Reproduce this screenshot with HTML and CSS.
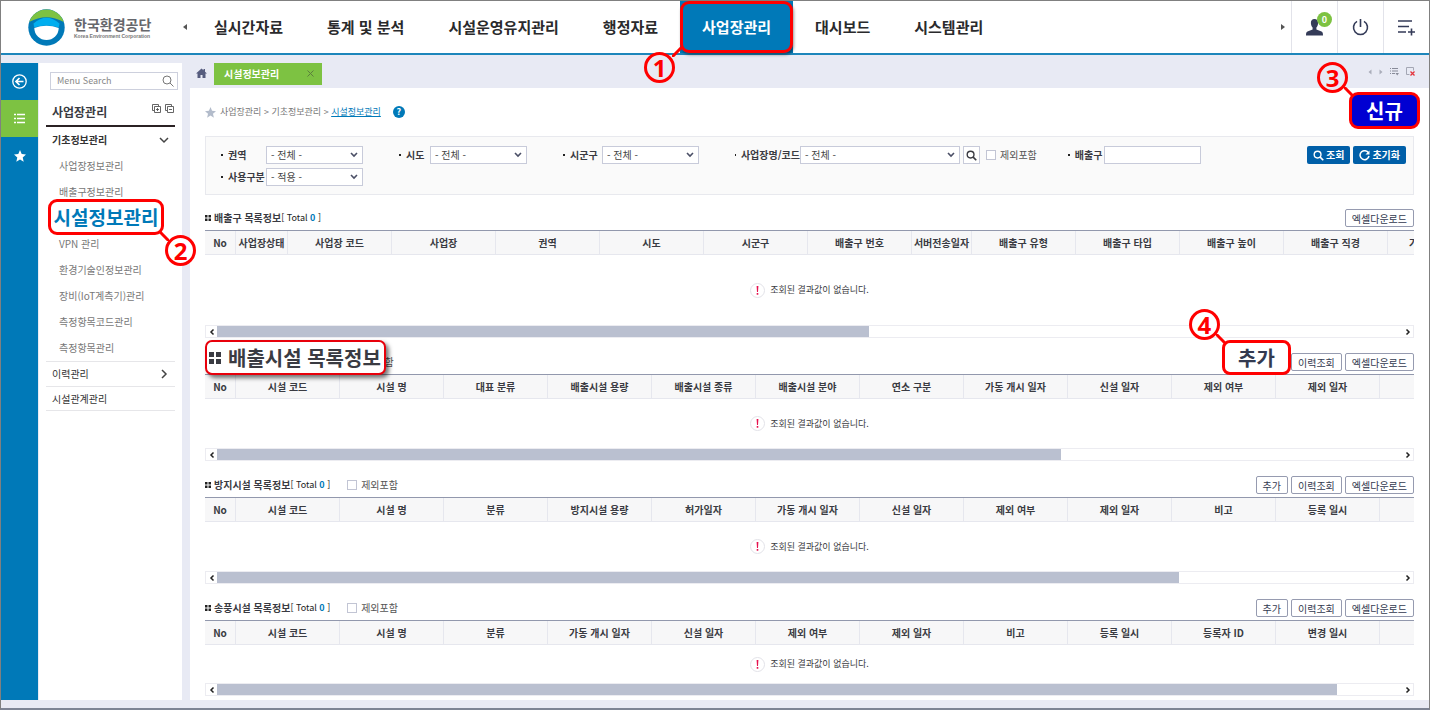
FILE: index.html
```html
<!DOCTYPE html>
<html lang="ko">
<head>
<meta charset="utf-8">
<title>시설정보관리</title>
<link rel="stylesheet" href="styles.css">
</head>
<body>
<svg class="sprite" aria-hidden="true">
  <symbol id="i-down" viewBox="0 0 8 6"><path d="M1 1l3 3 3-3" fill="none" stroke="currentColor" stroke-width="1.6"/></symbol>
  <symbol id="i-left" viewBox="0 0 6 8"><path d="M4.5 1.5L2 4l2.500 2.500" fill="none" stroke="currentColor" stroke-width="1.5"/></symbol>
  <symbol id="i-right" viewBox="0 0 6 8"><path d="M1.500 1.500L4 4 1.500 6.500" fill="none" stroke="currentColor" stroke-width="1.5"/></symbol>
  <symbol id="i-search" viewBox="0 0 12 12"><circle cx="5" cy="5" r="3.700" fill="none" stroke="currentColor" stroke-width="1.500"/><path d="M7.800 7.800L11.200 11.200" stroke="currentColor" stroke-width="1.800"/></symbol>
  <symbol id="i-star" viewBox="0 0 12 12"><path d="M6 0l1.700 4.100 4.300.4-3.300 2.900 1 4.300L6 9.400l-3.700 2.300 1-4.300L0 4.500l4.300-.4z" fill="currentColor"/></symbol>
  <symbol id="i-grid" viewBox="0 0 6 6"><path d="M0 0h2.500v2.500H0zM3.500 0H6v2.500H3.500zM0 3.500h2.500V6H0zM3.500 3.500H6V6H3.500z" fill="currentColor"/></symbol>
  <symbol id="i-alert" viewBox="0 0 15 15"><circle cx="7.500" cy="7.500" r="7" fill="#fff" stroke="#e2e2e8"/><path d="M6.600 3h1.800l-.4 6H7zM6.700 10h1.600v1.700H6.700z" fill="#e6124f"/></symbol>
</svg>
<div class="page">
  <header class="top">
    <a class="logo" href="#">
      <svg class="logo-mark" viewBox="0 0 37 37"><circle cx="18.500" cy="18.500" r="18.200" fill="#0079b8"/><path d="M1.200 13A18.200 18.200 0 0 1 35.800 13Q18.500 3.500 1.200 13z" fill="#7dc242"/><path d="M5.500 14.500Q18.500 3 31.500 14.500L30.800 18.500Q18.500 14.500 6.200 18.500z" fill="#00aeef"/><path d="M6.300 19Q18.500 14.500 30.700 19A12.200 12 0 0 1 6.300 19z" fill="#fff"/></svg>
      <span class="logo-text"><b>한국환경공단</b><small>Korea Environment Corporation</small></span>
    </a>
    <button class="nav-arrow" type="button" aria-label="이전"><svg viewBox="0 0 4 6"><path d="M4 0v6L0 3z" fill="#555"/></svg></button>
    <nav class="nav">
      <a href="#">실시간자료</a>
      <a href="#">통계 및 분석</a>
      <a href="#">시설운영유지관리</a>
      <a href="#">행정자료</a>
      <span class="nav-current"><a class="active" href="#">사업장관리</a>
        <svg class="lead lead-1" viewBox="0 0 10 10"><path d="M0 10L10 0"/></svg><span class="step step-1">1</span></span>
      <a href="#">대시보드</a>
      <a href="#">시스템관리</a>
    </nav>
    <button class="nav-arrow nav-next" type="button" aria-label="다음"><svg viewBox="0 0 4 6"><path d="M0 0v6l4-3z" fill="#555"/></svg></button>
    <div class="tools">
      <button type="button" aria-label="사용자"><svg class="i17" viewBox="0 0 17 17"><path d="M8.500 0C6 0 4.700 1.800 4.900 4.300c.1 1.900.8 3.400 1.700 4.300v2L1.500 12.600C.4 13 0 14 0 16.500h17c0-2.500-.4-3.500-1.500-3.900l-5.100-2v-2c.9-.9 1.600-2.400 1.700-4.300C12.300 1.800 11 0 8.500 0z" fill="#343b58"/></svg><span class="count">0</span></button>
      <button type="button" aria-label="로그아웃"><svg class="i17" viewBox="0 0 17 17"><path d="M5 2.400a7 7 0 1 0 7 0M8.500 0v8" fill="none" stroke="#343b58" stroke-width="1.600"/></svg></button>
      <button type="button" aria-label="메뉴 추가"><svg class="i17" viewBox="0 0 17 17"><path d="M0 2h14M0 7.500h11M0 13h8M10 13h7M13.500 9.500v7" fill="none" stroke="#343b58" stroke-width="1.600"/></svg></button>
    </div>
  </header>

  <div class="body">
    <div class="rail">
      <button type="button" aria-label="접기"><svg class="i15" viewBox="0 0 15 15"><circle cx="7.500" cy="7.500" r="6.700" fill="none" stroke="#fff" stroke-width="1.300"/><path d="M11.500 7.500H4.500M7.500 4L4 7.500 7.500 11" fill="none" stroke="#fff" stroke-width="1.700"/></svg></button>
      <button class="on" type="button" aria-label="메뉴"><svg class="i11" viewBox="0 0 11 11"><path d="M0 1.500h2M0 5.500h2M0 9.500h2M3 1.500h8M3 5.500h8M3 9.500h8" stroke="#fff" stroke-width="1.500"/></svg></button>
      <button type="button" aria-label="즐겨찾기"><svg class="i12"><use href="#i-star"/></svg></button>
    </div>

    <aside class="side">
      <div class="menu-search">
        <input type="text" placeholder="Menu Search" aria-label="Menu Search">
        <svg class="i12" viewBox="0 0 12 12"><circle cx="5" cy="5" r="4" fill="none" stroke="#777"/><path d="M8 8l3.500 3.500" stroke="#777"/></svg>
      </div>
      <div class="side-head">
        <h1>사업장관리</h1>
        <svg class="fold" viewBox="0 0 22 9"><g fill="none" stroke="#555" stroke-width=".9"><path d="M2 6.500H.5v-6h6V2M2.500 2.500h6v6h-6zM4 5.500h3M5.500 4v3M15 6.500h-1.500v-6h6V2M15.500 2.500h6v6h-6zM17 5.500h3"/></g></svg>
      </div>
      <ul class="menu">
        <li class="group open"><a href="#">기초정보관리</a><svg class="chev" viewBox="0 0 10 10"><path d="M1 3l4 4 4-4"/></svg></li>
        <li><a href="#">사업장정보관리</a></li>
        <li><a href="#">배출구정보관리</a></li>
        <li class="current"><a class="mark" href="#">시설정보관리</a><svg class="lead lead-2" viewBox="0 0 10 10"><path d="M0 0l10 10"/></svg><span class="step step-2">2</span></li>
        <li><a href="#">VPN 관리</a></li>
        <li><a href="#">환경기술인정보관리</a></li>
        <li><a href="#">장비(IoT계측기)관리</a></li>
        <li><a href="#">측정항목코드관리</a></li>
        <li><a href="#">측정항목관리</a></li>
        <li class="group line"><a href="#">이력관리</a><svg class="chev" viewBox="0 0 10 10"><path d="M3 1l4 4-4 4"/></svg></li>
        <li class="group line last"><a href="#">시설관계관리</a></li>
      </ul>
    </aside>

    <div class="work">
      <div class="tabs">
        <a class="home" href="#" aria-label="홈"><svg class="i11" viewBox="0 0 11 11"><path d="M5.500.5L0 5.500h1.500V10h3V7h2v3h3V5.500H11L9 3.700V1H7.500v1.300z" fill="#565c7e"/></svg></a>
        <div class="tab"><a href="#">시설정보관리</a><button type="button" aria-label="닫기"><svg viewBox="0 0 7 7"><path d="M.5.5l6 6M6.500.5l-6 6" stroke="#5b7f3c"/></svg></button></div>
        <div class="tab-tools">
          <svg class="tri" viewBox="0 0 4 6"><path d="M3.500.5v5L.5 3z" fill="#aaadba"/></svg>
          <svg class="tri" viewBox="0 0 4 6"><path d="M.5.5v5l3-2.500z" fill="#aaadba"/></svg>
          <svg class="i9" viewBox="0 0 9 9"><path d="M0 1.500h1M2 1.500h6M0 4h1M2 4h6M0 6.500h1M2 6.500h3" stroke="#888b99"/><path d="M5.500 6h3.500L7.200 8.500z" fill="#888b99"/></svg>
          <svg class="i9" viewBox="0 0 9 9"><path d="M3.500 7.500h-3v-7h7v3" fill="none" stroke="#a4a7b4"/><path d="M4.500 4.500l4 4M8.500 4.500l-4 4" stroke="#e3343c" stroke-width="1.300"/></svg>
        </div>
      </div>

      <main class="panel">
        <div class="crumbs">
          <svg class="i11 fav"><use href="#i-star"/></svg>
          <span>사업장관리 &gt; 기초정보관리 &gt; <a href="#">시설정보관리</a></span>
          <button class="help" type="button" aria-label="도움말">?</button>
          <button class="new" type="button">신규</button>
          <svg class="lead lead-3" viewBox="0 0 10 10"><path d="M0 0l10 10"/></svg><span class="step step-3">3</span>
        </div>

        <form class="filter">
          <div class="filter-row">
            <div class="field"><label class="w45" for="f1">권역</label><span class="select"><select id="f1"><option>- 전체 -</option></select><svg><use href="#i-down"/></svg></span></div>
            <div class="field"><label class="w32" for="f2">시도</label><span class="select"><select id="f2"><option>- 전체 -</option></select><svg><use href="#i-down"/></svg></span></div>
            <div class="field"><label class="w40" for="f3">시군구</label><span class="select"><select id="f3"><option>- 전체 -</option></select><svg><use href="#i-down"/></svg></span></div>
            <div class="field"><label class="w66" for="f4">사업장명/코드</label><span class="select wide"><select id="f4"><option>- 전체 -</option></select><svg><use href="#i-down"/></svg></span>
              <button class="find" type="button" aria-label="찾기"><svg class="i11"><use href="#i-search"/></svg></button>
              <span class="check"><input type="checkbox" id="c0"><label for="c0">제외포함</label></span></div>
            <div class="field"><label class="w37" for="f5">배출구</label><input class="text" type="text" id="f5"></div>
            <div class="actions">
              <button type="button"><svg class="i11"><use href="#i-search"/></svg>조회</button>
              <button type="button"><svg class="i11" viewBox="0 0 11 11"><path d="M9.500 3A4.500 4.500 0 1 0 10 6" fill="none" stroke="currentColor" stroke-width="1.500"/><path d="M10.500.5v4h-4z" fill="currentColor"/></svg>초기화</button>
            </div>
          </div>
          <div class="filter-row">
            <div class="field"><label class="w45" for="f6">사용구분</label><span class="select"><select id="f6"><option>- 적용 -</option></select><svg><use href="#i-down"/></svg></span></div>
          </div>
        </form>

        <section class="list">
          <div class="list-head">
            <h2><svg class="dots"><use href="#i-grid"/></svg>배출구 목록정보<span class="total">[ Total <em>0</em> ]</span></h2>
            <div class="btns"><button type="button">엑셀다운로드</button></div>
          </div>
          <div class="grid"><table>
            <colgroup><col class="no"><col class="c52"><col span="6"><col class="c60"><col span="5"></colgroup>
            <thead><tr><th>No</th><th>사업장상태</th><th>사업장 코드</th><th>사업장</th><th>권역</th><th>시도</th><th>시군구</th><th>배출구 번호</th><th>서버전송일자</th><th>배출구 유형</th><th>배출구 타입</th><th>배출구 높이</th><th>배출구 직경</th><th>가동 개시 일자</th></tr></thead>
          </table></div>
          <p class="empty tall"><svg class="i15"><use href="#i-alert"/></svg>조회된 결과값이 없습니다.</p>
          <div class="scroll"><button type="button" aria-label="왼쪽"><svg><use href="#i-left"/></svg></button><div class="track"><div class="thumb" style="width:55%"></div></div><button type="button" aria-label="오른쪽"><svg><use href="#i-right"/></svg></button></div>
        </section>

        <section class="list">
          <div class="list-head">
            <h2><span class="big-title"><svg><use href="#i-grid"/></svg>배출시설 목록정보</span></h2>
            <span class="check"><input type="checkbox" id="c1"><label for="c1">제외포함</label></span>
            <div class="btns">
              <span class="add-slot"><button class="add" type="button">추가</button><svg class="lead lead-4" viewBox="0 0 10 10"><path d="M0 0l10 10"/></svg><span class="step step-4">4</span></span>
              <button type="button">이력조회</button><button type="button">엑셀다운로드</button></div>
          </div>
          <div class="grid"><table>
            <colgroup><col class="no"><col span="12"></colgroup>
            <thead><tr><th>No</th><th>시설 코드</th><th>시설 명</th><th>대표 분류</th><th>배출시설 용량</th><th>배출시설 종류</th><th>배출시설 분야</th><th>연소 구분</th><th>가동 개시 일자</th><th>신설 일자</th><th>제외 여부</th><th>제외 일자</th><td></td></tr></thead>
          </table></div>
          <p class="empty"><svg class="i15"><use href="#i-alert"/></svg>조회된 결과값이 없습니다.</p>
          <div class="scroll"><button type="button" aria-label="왼쪽"><svg><use href="#i-left"/></svg></button><div class="track"><div class="thumb" style="width:71.2%"></div></div><button type="button" aria-label="오른쪽"><svg><use href="#i-right"/></svg></button></div>
        </section>

        <section class="list">
          <div class="list-head">
            <h2><svg class="dots"><use href="#i-grid"/></svg>방지시설 목록정보<span class="total">[ Total <em>0</em> ]</span></h2>
            <span class="check"><input type="checkbox" id="c2"><label for="c2">제외포함</label></span>
            <div class="btns"><button type="button">추가</button><button type="button">이력조회</button><button type="button">엑셀다운로드</button></div>
          </div>
          <div class="grid"><table>
            <colgroup><col class="no"><col span="12"></colgroup>
            <thead><tr><th>No</th><th>시설 코드</th><th>시설 명</th><th>분류</th><th>방지시설 용량</th><th>허가일자</th><th>가동 개시 일자</th><th>신설 일자</th><th>제외 여부</th><th>제외 일자</th><th>비고</th><th>등록 일시</th><td></td></tr></thead>
          </table></div>
          <p class="empty"><svg class="i15"><use href="#i-alert"/></svg>조회된 결과값이 없습니다.</p>
          <div class="scroll"><button type="button" aria-label="왼쪽"><svg><use href="#i-left"/></svg></button><div class="track"><div class="thumb" style="width:81.2%"></div></div><button type="button" aria-label="오른쪽"><svg><use href="#i-right"/></svg></button></div>
        </section>

        <section class="list">
          <div class="list-head">
            <h2><svg class="dots"><use href="#i-grid"/></svg>송풍시설 목록정보<span class="total">[ Total <em>0</em> ]</span></h2>
            <span class="check"><input type="checkbox" id="c3"><label for="c3">제외포함</label></span>
            <div class="btns"><button type="button">추가</button><button type="button">이력조회</button><button type="button">엑셀다운로드</button></div>
          </div>
          <div class="grid"><table>
            <colgroup><col class="no"><col span="12"></colgroup>
            <thead><tr><th>No</th><th>시설 코드</th><th>시설 명</th><th>분류</th><th>가동 개시 일자</th><th>신설 일자</th><th>제외 여부</th><th>제외 일자</th><th>비고</th><th>등록 일시</th><th>등록자 ID</th><th>변경 일시</th><td></td></tr></thead>
          </table></div>
          <p class="empty short"><svg class="i15"><use href="#i-alert"/></svg>조회된 결과값이 없습니다.</p>
          <div class="scroll"><button type="button" aria-label="왼쪽"><svg><use href="#i-left"/></svg></button><div class="track"><div class="thumb" style="width:94.5%"></div></div><button type="button" aria-label="오른쪽"><svg><use href="#i-right"/></svg></button></div>
        </section>
      </main>
    </div>
  </div>
</div>
</body>
</html>
```
FILE: styles.css
```css
* { box-sizing: border-box; }
body, h1, h2, p, ul { margin: 0; padding: 0; }
ul { list-style: none; }
a { color: inherit; text-decoration: none; }
em { font-style: normal; color: #0079b8; }
body, button, input, select { font-family: "Noto Sans CJK KR", "Noto Sans", sans-serif; font-size: 10px; line-height: 14px; color: #3a3b42; }
button { padding: 0; border: 0; background: none; cursor: pointer; }
svg { display: block; flex: none; }
.sprite { position: absolute; width: 0; height: 0; }

.i9 { width: 9px; height: 9px; }
.i11 { width: 11px; height: 11px; }
.i12 { width: 12px; height: 12px; }
.i15 { width: 15px; height: 15px; }
.i17 { width: 17px; height: 17px; }

.page { min-height: 100vh; display: flex; flex-direction: column; background: #e8eaf4; border: 1px solid #808080; border-bottom: 2px solid #7d8494; }

/* top bar */
.top { display: flex; height: 54px; background: #fff; border-bottom: 2px solid #1d86bb; }
.logo { display: flex; align-items: center; gap: 9px; padding-left: 27px; width: 180px; }
.logo-mark { width: 37px; height: 37px; }
.logo-text { display: flex; flex-direction: column; color: #66676c; }
.logo-text b { font-size: 14px; line-height: 18px; white-space: nowrap; }
.logo-text small { font: bold 5px/6px "Liberation Sans", Arial, sans-serif; color: #777; white-space: nowrap; }
.nav-arrow { display: flex; align-items: center; justify-content: center; width: 8px; }
.nav-arrow svg { width: 4px; height: 6px; }
.nav { display: flex; margin-left: 3px; }
.nav a { display: flex; align-items: center; height: 52px; padding: 0 22px; font-size: 15px; font-weight: bold; color: #2a2a2c; white-space: nowrap; }
.nav-current { position: relative; background: #0079b8; }
.nav .active { color: #fff; border: 3px solid #f00; border-radius: 9px; padding: 0 19px; box-shadow: 1px 2px 3px #0006; }
.nav-next { margin-left: auto; margin-right: 4px; }
.tools { display: flex; }
.tools button { position: relative; display: flex; align-items: center; justify-content: center; width: 46px; border-left: 1px solid #e2e3ea; }
.count { position: absolute; top: 11px; right: 5px; width: 15px; height: 15px; border-radius: 50%; background: #7dc242; color: #fff; font-size: 9px; font-weight: bold; line-height: 15px; text-align: center; }

/* numbered steps */
.step { position: absolute; z-index: 3; width: 31px; height: 31px; border: 3px solid #f00; border-radius: 50%; background: #fff; color: #f00; font: bold 24px/25px "Noto Sans", sans-serif; text-align: center; }
.lead { position: absolute; z-index: 4; width: 10px; height: 10px; fill: none; stroke: #f00; stroke-width: 3; }
.step-1 { left: -36px; top: 51px; background: #e8eaf4; }
.lead-1 { left: -8px; top: 46px; }
.step-2 { left: 119px; top: 30px; }
.lead-2 { left: 113px; top: 26px; }
.step-3 { right: 66px; top: -40px; background: #e8eaf4; }
.lead-3 { right: 60px; top: -15px; }
.step-4 { right: 68px; top: -44px; }
.lead-4 { right: 62px; top: -19px; }

.body { flex: 1; display: flex; padding: 0 0 8px; }

/* icon rail */
.rail { width: 37px; margin-top: 8px; background: #0079b8; color: #fff; }
.rail button { display: flex; align-items: center; justify-content: center; width: 100%; height: 37px; color: #fff; }
.rail .on { background: #7dc242; }

/* side menu */
.side { width: 143px; margin: 8px 8px 0 1px; padding: 9px 7px 0; background: #fff; }
.menu-search { display: flex; align-items: center; height: 18px; margin: 0 -3px 0 4px; padding: 0 3px 0 6px; border: 1px solid #cdd0dd; }
.menu-search input { flex: 1; min-width: 0; padding: 0; border: 0; outline: 0; font-size: 9px; }
.menu-search input::placeholder { color: #888; opacity: 1; }
.side-head { display: flex; align-items: center; justify-content: space-between; height: 37px; padding: 8px 1px 0 6px; border-bottom: 2px solid #2b2224; }
.side-head h1 { font-size: 12px; line-height: 16px; font-weight: bold; }
.fold { width: 22px; height: 9px; margin-bottom: 6px; }
.menu li { position: relative; display: flex; align-items: center; height: 26px; padding-left: 13px; color: #777; white-space: nowrap; }
.menu .group { justify-content: space-between; padding: 0 6px; color: #333; }
.menu .open { font-weight: bold; }
.menu .line { height: 25px; border-top: 1px solid #e6e6e9; }
.menu .last { border-bottom: 1px solid #e6e6e9; }
.chev { width: 10px; height: 10px; fill: none; stroke: #444; stroke-width: 1.5; }
.mark { position: absolute; z-index: 2; left: 2px; top: -6px; width: 116px; height: 36px; border: 3px solid #f00; border-radius: 9px; background: #fff; color: #0079b8; font-size: 19px; font-weight: bold; line-height: 30px; text-align: center; }

/* work area */
.work { flex: 1; min-width: 0; display: flex; flex-direction: column; }
.tabs { display: flex; align-items: center; height: 33px; padding: 0 14px 0 6px; }
.home { margin-right: 7px; padding-top: 4px; }
.tab { display: flex; align-items: center; justify-content: space-between; width: 108px; height: 22px; margin-top: 4px; padding: 0 8px 0 10px; background: #7dc242; color: #fff; font-weight: bold; }
.tab svg { width: 7px; height: 7px; }
.tab-tools { display: flex; align-items: center; gap: 7px; margin-left: auto; }
.tri { width: 4px; height: 6px; }
.panel { flex: 1; padding: 14px 15px 0; background: #fff; }
.crumbs { position: relative; display: flex; align-items: center; gap: 4px; height: 20px; margin-bottom: 14px; font-size: 9px; color: #777; }
.crumbs a { color: #0079b8; text-decoration: underline; }
.fav { color: #b3bccb; }
.help { width: 12px; height: 12px; margin-left: 8px; border-radius: 50%; background: #0079b8; color: #fff; font-size: 9px; font-weight: bold; line-height: 12px; }
.new { position: absolute; z-index: 2; right: -6px; top: -10px; width: 71px; height: 37px; border: 3px solid #f00; border-radius: 9px; background: #0000d2; color: #fff; font-size: 20px; font-weight: bold; line-height: 28px; }

.filter { display: flex; flex-direction: column; gap: 4px; margin-bottom: 13px; padding: 9px 7px 8px 14px; border: 1px solid #e8e9ee; background: #fafafa; }
.filter-row { display: flex; align-items: center; gap: 30px; min-height: 18px; }
.field { display: flex; align-items: center; }
.field > label { white-space: nowrap; font-weight: bold; display: flex; align-items: center; gap: 5px; }
.field > label::before { content: ""; width: 2px; height: 2px; margin-left: 1px; background: #222; }
.w32 { width: 32px; }
.w37 { width: 37px; }
.w40 { width: 40px; }
.w45 { width: 46px; }
.w66 { width: 66px; }
.select { position: relative; width: 97px; height: 18px; }
.select:last-child { margin-right: 5px; }
.wide { width: 160px; }
.select select { appearance: none; width: 100%; height: 18px; padding: 0 4px; border: 1px solid #c8cbda; border-radius: 0; background: #fff; color: #444; line-height: 16px; }
.select svg { position: absolute; right: 5px; top: 6px; width: 8px; height: 6px; color: #4b4f66; pointer-events: none; }
.find { display: flex; align-items: center; justify-content: center; width: 17px; height: 18px; margin: 0 6px 0 3px; border: 1px solid #c8cbda; background: #fff; }
.text { width: 97px; height: 18px; border: 1px solid #c8cbda; background: #fff; }
.check { display: flex; align-items: center; gap: 4px; color: #555; white-space: nowrap; }
.check input { appearance: none; width: 10px; height: 10px; margin: 0; border: 1px solid #c2c5d4; background: #fff; }
.actions { display: flex; gap: 3px; margin-left: auto; }
.actions button { display: flex; align-items: center; gap: 2px; height: 18px; padding: 0 6px; border-radius: 2px; background: #005fa8; color: #fff; font-weight: bold; white-space: nowrap; }

/* lists */
.list { margin-bottom: 14px; }
.list:last-child { margin-bottom: 4px; }
.list-head { display: flex; align-items: center; height: 20px; margin-bottom: 2px; }
.list-head h2 { position: relative; display: flex; align-items: center; min-width: 121px; height: 20px; margin-right: 17px; font-size: 10px; font-weight: bold; white-space: pre; }
.total { font-size: 9px; font-weight: normal; color: #222; }
.total em { font-weight: bold; }
.dots { width: 6px; height: 6px; margin-right: 3px; color: #222; }
.big-title { position: absolute; z-index: 2; left: 0; top: -12px; display: flex; align-items: center; gap: 7px; width: 181px; height: 35px; padding: 0 2px; border: 2px solid #e8000b; border-radius: 7px; background: #fff; box-shadow: 3px 3px 4px #0008; font-size: 20px; line-height: 28px; }
.big-title svg { width: 12px; height: 12px; }
.btns { display: flex; gap: 3px; margin-left: auto; }
.btns button { height: 18px; padding: 0 6px; border: 1px solid #969bb0; border-radius: 2px; background: #fff; line-height: 15px; color: #333a50; white-space: nowrap; }
.add-slot { position: relative; width: 32px; height: 18px; }
.add-slot .add { position: absolute; z-index: 2; right: -3px; top: -13px; width: 69px; height: 35px; border: 3px solid #f00; border-radius: 8px; font-size: 20px; font-weight: bold; line-height: 26px; }
.grid { overflow: hidden; border-top: 1px solid #9298ad; }
.grid table { width: 100%; table-layout: fixed; border-collapse: separate; border-spacing: 0; }
.grid col { width: 104px; }
.grid .no { width: 31px; }
.grid .c52 { width: 52px; }
.grid .c60 { width: 60px; }
.grid th, .grid td { height: 24px; padding: 0; border-right: 1px solid #e6e7ee; border-bottom: 1px solid #e6e7ee; background: #f7f7f8; font-size: 10px; font-weight: bold; text-align: center; white-space: nowrap; }
.empty { display: flex; align-items: center; justify-content: center; gap: 5px; height: 49px; font-size: 9px; }
.tall { height: 70px; }
.short { height: 38px; }
.scroll { display: flex; height: 13px; border: 1px solid #ececf1; }
.scroll button { display: flex; align-items: center; justify-content: center; width: 11px; }
.scroll button svg { width: 6px; height: 8px; color: #222; }
.track { flex: 1; }
.thumb { height: 11px; background: #bac0d0; }
```
